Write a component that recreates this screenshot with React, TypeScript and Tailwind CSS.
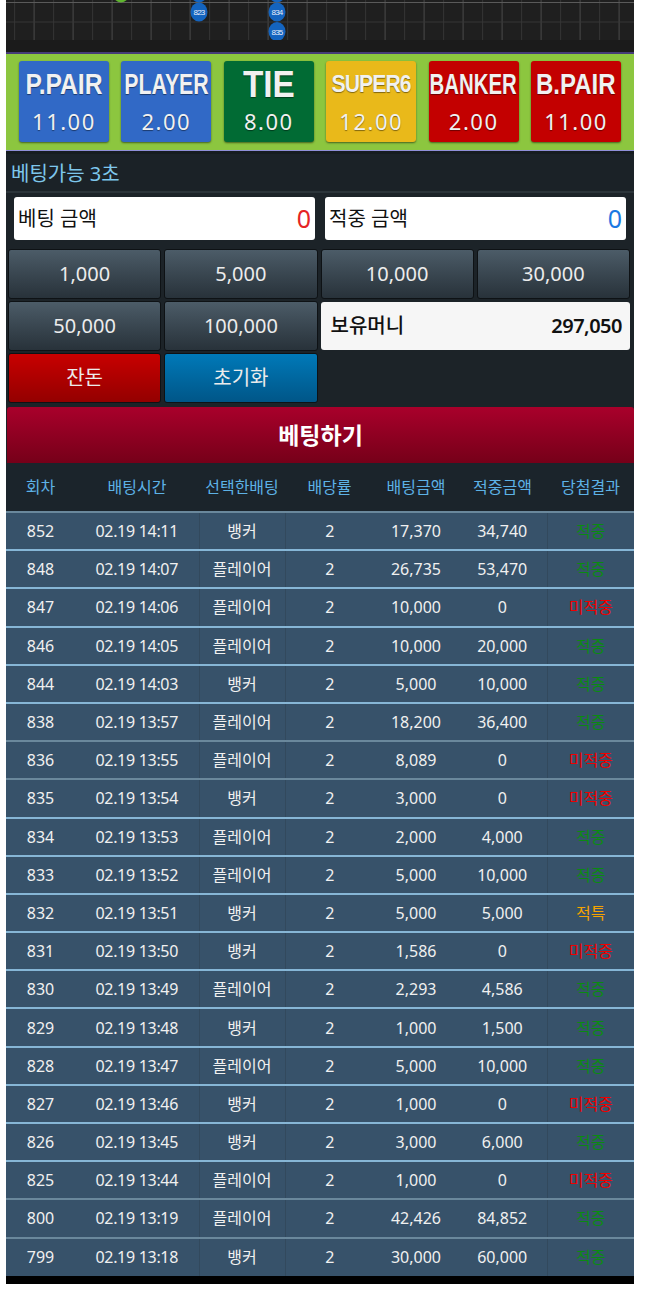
import React from 'react';

const KR = "font-['Noto_Sans','Noto_Sans_CJK_KR',sans-serif]";

const odds = [
    { label: 'P.PAIR', value: '11.00', bg: 'bg-[#3169c6]', cls: 'text-[30px] scale-x-[0.82]' },
    { label: 'PLAYER', value: '2.00', bg: 'bg-[#3169c6]', cls: 'text-[30px] scale-x-[0.71]' },
    { label: 'TIE', value: '8.00', bg: 'bg-[#016b34]', cls: 'text-[37px] scale-x-[0.9]' },
    { label: 'SUPER6', value: '12.00', bg: 'bg-[#e9b91a]', cls: 'text-[23px] scale-x-[0.92] tracking-[-1px]' },
    { label: 'BANKER', value: '2.00', bg: 'bg-[#c30000]', cls: 'text-[30px] scale-x-[0.68]' },
    { label: 'B.PAIR', value: '11.00', bg: 'bg-[#c30000]', cls: 'text-[30px] scale-x-[0.8]' },
];

const rows: [string, string, string, string, string, string][] = [
    ['852', '02.19 14:11', '뱅커', '17,370', '34,740', '적중'],
    ['848', '02.19 14:07', '플레이어', '26,735', '53,470', '적중'],
    ['847', '02.19 14:06', '플레이어', '10,000', '0', '미적중'],
    ['846', '02.19 14:05', '플레이어', '10,000', '20,000', '적중'],
    ['844', '02.19 14:03', '뱅커', '5,000', '10,000', '적중'],
    ['838', '02.19 13:57', '플레이어', '18,200', '36,400', '적중'],
    ['836', '02.19 13:55', '플레이어', '8,089', '0', '미적중'],
    ['835', '02.19 13:54', '뱅커', '3,000', '0', '미적중'],
    ['834', '02.19 13:53', '플레이어', '2,000', '4,000', '적중'],
    ['833', '02.19 13:52', '플레이어', '5,000', '10,000', '적중'],
    ['832', '02.19 13:51', '뱅커', '5,000', '5,000', '적특'],
    ['831', '02.19 13:50', '뱅커', '1,586', '0', '미적중'],
    ['830', '02.19 13:49', '플레이어', '2,293', '4,586', '적중'],
    ['829', '02.19 13:48', '뱅커', '1,000', '1,500', '적중'],
    ['828', '02.19 13:47', '플레이어', '5,000', '10,000', '적중'],
    ['827', '02.19 13:46', '뱅커', '1,000', '0', '미적중'],
    ['826', '02.19 13:45', '뱅커', '3,000', '6,000', '적중'],
    ['825', '02.19 13:44', '플레이어', '1,000', '0', '미적중'],
    ['800', '02.19 13:19', '플레이어', '42,426', '84,852', '적중'],
    ['799', '02.19 13:18', '뱅커', '30,000', '60,000', '적중'],
];

const grayTop = ['836', '835', '800', '799'];

function resultColor(r: string) {
    if (r === '적중') return 'text-[#0b8a12]';
    if (r === '적특') return 'text-[#f5a300]';
    return 'text-[#f00000]';
}

function Bead({ x, y, n, color = '#1464bf' }: { x: number; y: number; n?: string; color?: string }) {
    return (
        <g>
            <ellipse cx={x} cy={y} rx={8.5} ry={9.5} fill={color} />
            {n && (
                <text x={x} y={y + 3} fontSize="8" fill="#e8eefa" textAnchor="middle" fontFamily="Liberation Sans, sans-serif" letterSpacing="-0.8">
                    {n}
                </text>
            )}
        </g>
    );
}

function Board() {
    const xs = Array.from({ length: 33 }, (_, i) => 8.6 + i * 19.5);
    return (
        <div className="h-[52px] bg-[#1b1b1b]">
            <svg width="628" height="40" className="block bg-[#1f1f1f]">
                {xs.map((x, i) => (
                    <line key={i} x1={x} y1={0} x2={x} y2={40} stroke={i % 2 === 1 ? '#4a4a4a' : '#343434'} strokeWidth={1} />
                ))}
                <line x1={0} y1={2.5} x2={628} y2={2.5} stroke="#5a5a5a" strokeWidth={1} />
                <line x1={0} y1={22} x2={628} y2={22} stroke="#363636" strokeWidth={1} />
                <Bead x={115} y={-7} color="#5fb52e" />
                <Bead x={193} y={-7} />
                <Bead x={271} y={-7} />
                <Bead x={193} y={12} n="823" />
                <Bead x={271} y={12} n="834" />
                <Bead x={271} y={31.5} n="835" />
            </svg>
        </div>
    );
}

function Chip({ children, tone = 'gray' }: { children: React.ReactNode; tone?: 'gray' | 'red' | 'blue' }) {
    const bg =
        tone === 'red'
            ? 'bg-gradient-to-b from-[#c80000] to-[#940000]'
            : tone === 'blue'
                ? 'bg-gradient-to-b from-[#0079b8] to-[#005688]'
                : 'bg-gradient-to-b from-[#4c5c68] to-[#28323a]';
    return (
        <button className={`h-[50px] rounded-[3px] border border-[#0e1215] ${bg} text-[20px] text-[#ececec] ${KR}`}>
            {children}
        </button>
    );
}

export default function App() {
    return (
        <div className="min-h-[1316px] bg-white">
            <div className="ml-[6px] w-[628px] bg-[#1c2328]">
                <Board />

                <div className="border-t-2 border-b border-t-[#463c78] border-b-[#9090d8] bg-[#8cc63f] px-[13px] pt-[7px] pb-[8px]">
                    <div className="grid grid-cols-6 gap-[12.6px]">
                        {odds.map((o) => (
                            <div key={o.label} className={`${o.bg} h-[81px] rounded-[3px] shadow-[0_1px_2px_rgba(0,0,0,0.5)] flex flex-col items-center pt-[5px] text-[#f1f1f1] [text-shadow:0_1px_1px_rgba(0,0,0,0.45)]`}>
                                <div className={`h-[36px] flex items-center font-['Liberation_Sans',Arial,sans-serif] font-bold leading-none whitespace-nowrap ${o.cls}`}>
                                    {o.label}
                                </div>
                                <div className="mt-[6px] font-['Noto_Sans',sans-serif] text-[22px] leading-[26px] tracking-[1.5px]">{o.value}</div>
                            </div>
                        ))}
                    </div>
                </div>

                <div className="border-t-[3px] border-[#161c20] bg-[#1b2227] h-[42px] flex items-center px-[5px] pt-[2px] border-b-2 border-b-[#2b3439]">
                    <span className={`text-[20px] text-[#7ec7ec] ${KR}`}>베팅가능 3초</span>
                </div>

                <div className="grid grid-cols-2 gap-[10px] px-[8px] pt-[4px] pb-[9px]">
                    <div className="h-[43px] rounded-[3px] bg-white flex items-center justify-between px-[4px]">
                        <span className={`text-[20px] text-[#111] ${KR}`}>베팅 금액</span>
                        <span className={`text-[25px] text-[#e52424] ${KR}`}>0</span>
                    </div>
                    <div className="h-[43px] rounded-[3px] bg-white flex items-center justify-between px-[4px]">
                        <span className={`text-[20px] text-[#111] ${KR}`}>적중 금액</span>
                        <span className={`text-[25px] text-[#1b78e2] ${KR}`}>0</span>
                    </div>
                </div>

                <div className="grid grid-cols-4 gap-x-[3px] gap-y-[2px] pl-[2px] pr-[4px]">
                    <Chip>1,000</Chip>
                    <Chip>5,000</Chip>
                    <Chip>10,000</Chip>
                    <Chip>30,000</Chip>
                    <Chip>50,000</Chip>
                    <Chip>100,000</Chip>
                    <div className="col-span-2 my-[1px] h-[48px] rounded-[3px] bg-[#f6f6f6] flex items-center justify-between pl-[10px] pr-[8px]">
                        <span className={`text-[20px] font-medium text-[#111] ${KR}`}>보유머니</span>
                        <span className={`text-[20px] font-semibold text-[#111] tracking-[-0.5px] ${KR}`}>297,050</span>
                    </div>
                    <Chip tone="red">잔돈</Chip>
                    <Chip tone="blue">초기화</Chip>
                </div>

                <div className="pt-[4px] pl-[1px]">
                    <button className={`w-full h-[56px] rounded-t-[3px] bg-gradient-to-b from-[#a9002b] to-[#760019] text-[23px] font-bold text-white ${KR}`}>
                        베팅하기
                    </button>
                </div>

                <table className={`w-[628px] table-fixed border-collapse ${KR}`}>
                    <colgroup>
                        <col className="w-[69px]" />
                        <col className="w-[124px]" />
                        <col className="w-[86px]" />
                        <col className="w-[89px]" />
                        <col className="w-[84px]" />
                        <col className="w-[89px]" />
                        <col className="w-[87px]" />
                    </colgroup>
                    <thead>
                        <tr className="h-[49px] bg-[#1b242b] text-[16px] text-[#5db2e6]">
                            {['회차', '배팅시간', '선택한배팅', '배당률', '배팅금액', '적중금액', '당첨결과'].map((h) => (
                                <th key={h} className="font-normal text-center">{h}</th>
                            ))}
                        </tr>
                    </thead>
                    <tbody>
                        {rows.map((r, i) => (
                            <tr
                                key={r[0]}
                                className={`h-[38.2px] bg-[#37526a] text-[16px] text-[#f0f0f0] border-t-2 ${i === 0 || grayTop.includes(r[0]) ? 'border-[#6a889c]' : 'border-[#86b6d6]'}`}
                            >
                                <td className="text-center">{r[0]}</td>
                                <td className="text-center tracking-[-0.3px]">{r[1]}</td>
                                <td className="text-center border-l border-[#32495d]">{r[2]}</td>
                                <td className="text-center border-l border-[#32495d]">2</td>
                                <td className="text-center">{r[3]}</td>
                                <td className="text-center">{r[4]}</td>
                                <td className={`text-center border-l border-[#32495d] ${resultColor(r[5])}`}>{r[5]}</td>
                            </tr>
                        ))}
                    </tbody>
                </table>
                <div className="h-[8px] bg-black" />
            </div>
        </div>
    );
}
